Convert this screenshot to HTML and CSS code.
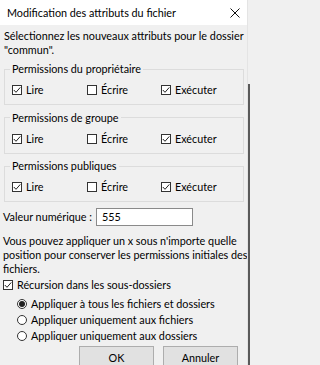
FILE: index.html
```html
<!DOCTYPE html>
<html lang="fr">
<head>
<meta charset="utf-8">
<title>Modification des attributs du fichier</title>
<link rel="stylesheet" href="styles.css">
</head>
<body>
<div class="window">
  <div class="dialog">
    <div class="titlebar">
      <span class="title">Modification des attributs du fichier</span>
      <svg class="close" width="10" height="10" viewBox="0 0 10 10"><path d="M0.5 0.5 L9.5 9.5 M9.5 0.5 L0.5 9.5" stroke="#111" stroke-width="1" fill="none"/></svg>
    </div>
    <div class="body">
      <p class="intro">Sélectionnez les nouveaux attributs pour le dossier<br>"commun".</p>

      <fieldset class="group">
        <legend>Permissions du propriétaire</legend>
        <div class="perms">
          <label class="check"><span class="box"><svg viewBox="0 0 10 10"><path d="M1.8 5 L4 7.3 L8.3 2.4" /></svg></span>Lire</label>
          <label class="check"><span class="box"></span>Écrire</label>
          <label class="check"><span class="box"><svg viewBox="0 0 10 10"><path d="M1.8 5 L4 7.3 L8.3 2.4" /></svg></span>Exécuter</label>
        </div>
      </fieldset>

      <fieldset class="group">
        <legend>Permissions de groupe</legend>
        <div class="perms">
          <label class="check"><span class="box"><svg viewBox="0 0 10 10"><path d="M1.8 5 L4 7.3 L8.3 2.4" /></svg></span>Lire</label>
          <label class="check"><span class="box"></span>Écrire</label>
          <label class="check"><span class="box"><svg viewBox="0 0 10 10"><path d="M1.8 5 L4 7.3 L8.3 2.4" /></svg></span>Exécuter</label>
        </div>
      </fieldset>

      <fieldset class="group">
        <legend>Permissions publiques</legend>
        <div class="perms">
          <label class="check"><span class="box"><svg viewBox="0 0 10 10"><path d="M1.8 5 L4 7.3 L8.3 2.4" /></svg></span>Lire</label>
          <label class="check"><span class="box"></span>Écrire</label>
          <label class="check"><span class="box"><svg viewBox="0 0 10 10"><path d="M1.8 5 L4 7.3 L8.3 2.4" /></svg></span>Exécuter</label>
        </div>
      </fieldset>

      <div class="numeric">
        <span class="numeric-label">Valeur numérique :</span>
        <span class="input">555</span>
      </div>

      <p class="note">Vous pouvez appliquer un x sous n'importe quelle<br>position pour conserver les permissions initiales des<br>fichiers.</p>

      <label class="check recursion"><span class="box"><svg viewBox="0 0 10 10"><path d="M1.8 5 L4 7.3 L8.3 2.4" /></svg></span>Récursion dans les sous-dossiers</label>

      <div class="radios">
        <label class="radio"><span class="dot on"></span>Appliquer à tous les fichiers et dossiers</label>
        <label class="radio"><span class="dot"></span>Appliquer uniquement aux fichiers</label>
        <label class="radio"><span class="dot"></span>Appliquer uniquement aux dossiers</label>
      </div>

      <div class="buttons">
        <button class="btn">OK</button>
        <button class="btn">Annuler</button>
      </div>
    </div>
  </div>
  <div class="edge"></div>
</div>
</body>
</html>
```

FILE: styles.css
```css
* { box-sizing: border-box; }
html, body { margin: 0; padding: 0; }
html { background: #f0f0f0; }
body {
  width: 250px;
  height: 365px;
  overflow: hidden;
  font-family: Lato, "Noto Sans", sans-serif;
  font-size: 10.8px;
  color: #000;
  background: #f0f0f0;
}
.window {
  display: flex;
  height: 365px;
}
.dialog {
  width: 247px;
  height: 365px;
  background: #f0f0f0;
  display: flex;
  flex-direction: column;
  white-space: nowrap;
}
.edge {
  width: 3px;
  background: linear-gradient(to bottom, #f0f0f0 0, #f0f0f0 84px, #5a5a5a 84px, #5a5a5a 100%);
  border-left: 1px solid #e4e4e4;
}
.titlebar {
  height: 25px;
  flex: none;
  background: #fff;
  display: flex;
  align-items: center;
  justify-content: space-between;
  padding: 0 7px 0 7px;
}
.title { line-height: 14px; }
.close { display: block; margin-top: 1px; }
.body {
  padding: 0 9px 0 3px;
  line-height: 14px;
}
.intro {
  margin: 4px 0 0 0;
  padding-left: 1px;
}
.group {
  margin: 5.5px -6px 0 1px;
  padding: 7px 0 7px 7px;
  border: 1px solid #dcdcdc;
  min-width: 0;
}
.group:first-of-type { margin-top: 5px; }
.group legend {
  padding: 0 2px;
  margin-left: -2px;
  line-height: 14px;
}
.perms {
  display: grid;
  grid-template-columns: 75px 74px auto;
}
.check {
  display: flex;
  align-items: center;
  line-height: 14px;
}
.box {
  width: 10px;
  height: 10px;
  border: 1px solid #333;
  background: #fff;
  margin-right: 4px;
  flex: none;
  position: relative;
}
.box svg {
  position: absolute;
  left: -1px;
  top: -1px;
  width: 10px;
  height: 10px;
  fill: none;
  stroke: #222;
  stroke-width: 1;
}
.numeric {
  display: flex;
  align-items: center;
  margin-top: 6px;
}
.numeric-label { width: 93px; flex: none; }
.input {
  width: 97px;
  height: 18px;
  border: 1px solid #8a8a8a;
  background: #fff;
  padding-left: 5px;
  line-height: 16px;
}
.note {
  margin: 8px 0 0 0;
}
.recursion {
  margin-top: 2px;
}
.radios {
  margin-top: 4px;
  padding-left: 14px;
}
.radio {
  display: flex;
  align-items: center;
  line-height: 16px;
}
.dot {
  width: 10px;
  height: 10px;
  border: 1px solid #333;
  border-radius: 50%;
  background: #fff;
  margin-right: 4px;
  flex: none;
  display: flex;
  align-items: center;
  justify-content: center;
}
.dot.on::after {
  content: "";
  width: 6px;
  height: 6px;
  border-radius: 50%;
  background: #222;
}
.buttons {
  display: flex;
  justify-content: flex-end;
  gap: 9px;
  margin-top: 2px;
}
.btn {
  width: 75px;
  height: 22px;
  background: #e1e1e1;
  border: 1px solid #adadad;
  font-family: inherit;
  font-size: inherit;
  color: #000;
  padding: 0;
  border-radius: 0;
}
```
